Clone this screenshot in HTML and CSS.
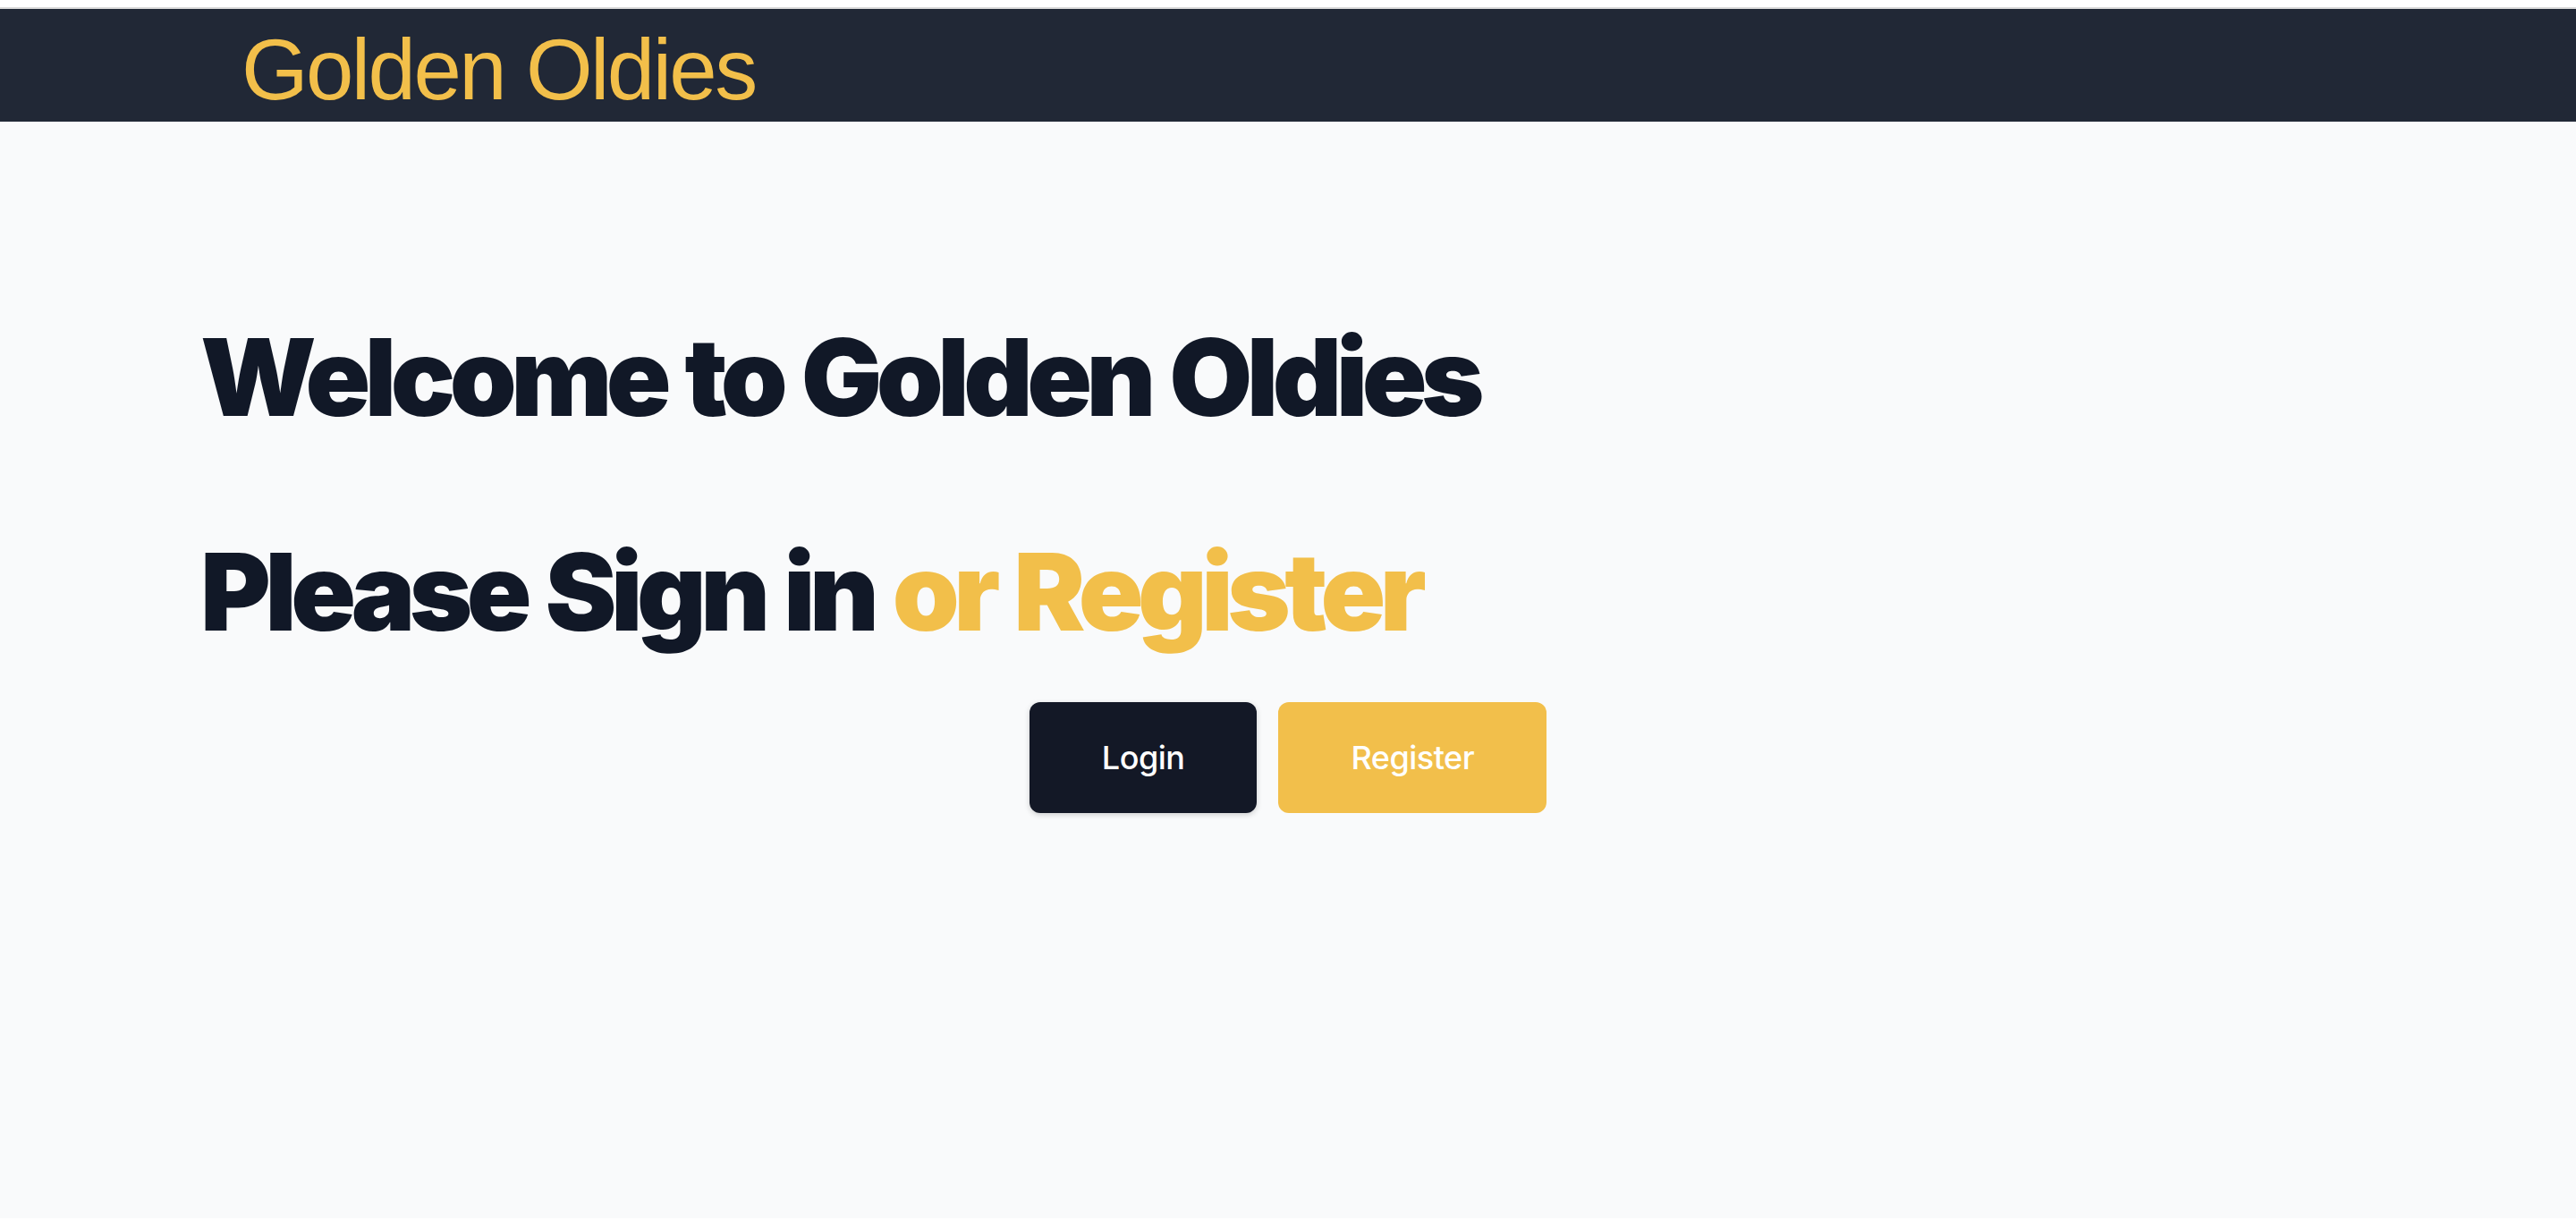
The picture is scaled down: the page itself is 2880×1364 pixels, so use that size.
FILE: index.html
```html
<!DOCTYPE html>
<html lang="en">
<head>
<meta charset="utf-8">
<title>Golden Oldies</title>
<link rel="stylesheet" href="styles.css">
</head>
<body>
<header class="topbar">
  <div class="brand">Golden Oldies</div>
</header>
<main class="hero">
  <h1 class="title">Welcome to Golden Oldies</h1>
  <h1 class="title second">Please Sign in <span class="accent">or Register</span></h1>
  <div class="actions">
    <button class="btn btn-dark">Login</button>
    <button class="btn btn-gold">Register</button>
  </div>
</main>
</body>
</html>
```

FILE: styles.css
```css
html, body {
  margin: 0;
  padding: 0;
}
body {
  background: #ffffff;
  padding-top: 8px;
  font-family: Inter, "Liberation Sans", sans-serif;
}
.topbar {
  border-top: 2px solid #dadada;
  background: #212836;
  height: 128px;
  display: flex;
  align-items: center;
  padding-left: 270px;
  box-sizing: border-box;
}
.brand {
  font-family: "Liberation Sans", Arial, sans-serif;
  font-size: 96px;
  line-height: 96px;
  letter-spacing: -2.6px;
  color: #f2bf4a;
  padding-top: 10px;
}
.hero {
  background: #f9fafb;
  min-height: calc(100vh - 138px);
  box-sizing: border-box;
  padding: 226px 0 0 224px;
  display: flex;
  flex-direction: column;
}
.title {
  margin: 0;
  font-family: Inter, sans-serif;
  font-weight: 900;
  font-size: 120px;
  line-height: 120px;
  letter-spacing: -6.5px;
  word-spacing: 4px;
  color: #111827;
}
.second {
  margin-top: 120px;
}
.accent {
  color: #f2bf4a;
}
.actions {
  display: flex;
  justify-content: center;
  gap: 24px;
  margin-top: 63px;
  margin-left: -224px;
}
.btn {
  height: 124px;
  border: none;
  border-radius: 12px;
  padding: 0 81px;
  font-family: Inter, sans-serif;
  font-size: 36px;
  font-weight: 500;
  letter-spacing: -0.5px;
  color: #ffffff;
  cursor: pointer;
}
.btn-dark {
  background: #131826;
  box-shadow: 0 2px 6px rgba(0, 0, 0, 0.18);
}
.btn-gold {
  background: #f2bf4b;
}
```
